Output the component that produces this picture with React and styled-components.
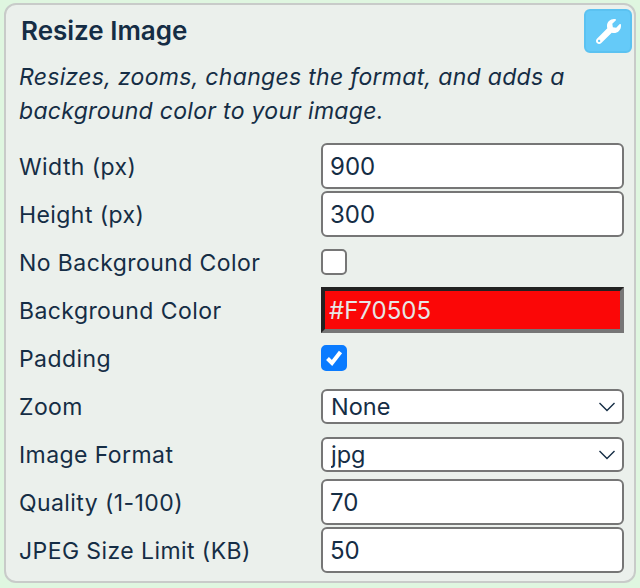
import React from 'react';
import styled, { createGlobalStyle } from 'styled-components';
import { FaWrench } from 'react-icons/fa';

const GlobalStyle = createGlobalStyle`
  html, body {
    margin: 0;
    padding: 0;
    background: #dff6e0;
  }
  body {
    font-family: Inter, "Liberation Sans", sans-serif;
    color: #152d45;
  }
  * {
    box-sizing: border-box;
  }
`;

const Page = styled.div`
  width: 640px;
  height: 588px;
  padding: 3px 4px 0;
`;

const Card = styled.section`
  position: relative;
  width: 632px;
  height: 580px;
  padding: 8px 12px 0 13px;
  background: #ebf0ec;
  border: 2px solid #c8cbc9;
  border-radius: 12px;
`;

const Title = styled.h2`
  margin: 0 0 0 2px;
  font-size: 26px;
  line-height: 36px;
  font-weight: 600;
`;

const Description = styled.p`
  margin: 11px 0 0;
  font-size: 23px;
  line-height: 34px;
  font-style: italic;
  letter-spacing: 0.3px;
`;

const ToolButton = styled.button`
  position: absolute;
  top: 4px;
  right: 2px;
  width: 48px;
  height: 44px;
  display: flex;
  align-items: center;
  justify-content: center;
  padding: 0;
  color: #fff;
  font-size: 25px;
  background: #65caf8;
  border: 2px solid #5bc2f1;
  border-radius: 6px;
`;

const Fields = styled.div`
  margin-top: 15px;
  display: flex;
  flex-direction: column;
  gap: 2px;
`;

const Row = styled.label`
  height: 46px;
  display: grid;
  grid-template-columns: 302px 303px;
  align-items: center;
`;

const LabelText = styled.span`
  padding-top: 2px;
  font-size: 23px;
  letter-spacing: 0.42px;
`;

const TextInput = styled.input`
  width: 303px;
  height: 46px;
  padding: 0 7px;
  font: inherit;
  font-size: 24px;
  color: #152d45;
  background: #fff;
  border: 2px solid #767676;
  border-radius: 6px;
  outline: none;
`;

const ColorInput = styled.input`
  width: 303px;
  height: 46px;
  padding: 0 4px;
  font: inherit;
  font-size: 24px;
  color: #e6e6e6;
  background: #fb0707;
  border-style: solid;
  border-width: 4px;
  border-color: #222 #767676 #767676 #222;
  border-radius: 0;
  outline: none;
`;

const CheckWrap = styled.span`
  position: relative;
  width: 26px;
  height: 26px;
  display: block;
`;

const CheckBox = styled.input`
  appearance: none;
  display: block;
  width: 26px;
  height: 26px;
  margin: 0;
  background: ${(props) => (props.checked ? '#0a7bff' : '#fff')};
  border: 2px solid ${(props) => (props.checked ? '#0a7bff' : '#767676')};
  border-radius: 5px;
`;

const CheckMark = styled.svg`
  position: absolute;
  top: 4px;
  left: 4px;
  width: 18px;
  height: 18px;
  pointer-events: none;
`;

const SelectWrap = styled.span`
  position: relative;
  display: block;
  width: 303px;
  height: 35px;
`;

const Select = styled.select`
  appearance: none;
  display: block;
  width: 303px;
  height: 35px;
  padding: 0 30px 0 8px;
  font: inherit;
  font-size: 23.5px;
  color: #152d45;
  background: #fff;
  border: 2px solid #767676;
  border-radius: 6px;
  outline: none;
`;

const Chevron = styled.svg`
  position: absolute;
  top: 12px;
  right: 8px;
  width: 18px;
  height: 12px;
  pointer-events: none;
`;

const Dropdown = ({ value, options }) => (
  <SelectWrap>
    <Select defaultValue={value}>
      {options.map((o) => (
        <option key={o}>{o}</option>
      ))}
    </Select>
    <Chevron viewBox="0 0 18 12" fill="none" stroke="#152d45" strokeWidth="1.4">
      <path d="M1.5 2 9 9.5 16.5 2" />
    </Chevron>
  </SelectWrap>
);

const Check = ({ checked }) => (
  <CheckWrap>
    <CheckBox type="checkbox" checked={checked} readOnly />
    {checked && (
      <CheckMark viewBox="0 0 18 18" fill="none" stroke="#fff" strokeWidth="4">
        <path d="M2.5 9.5 7 14 15.5 3" />
      </CheckMark>
    )}
  </CheckWrap>
);

const App = () => (
  <Page>
    <GlobalStyle />
    <Card>
      <Title>Resize Image</Title>
      <ToolButton type="button" aria-label="Settings">
        <FaWrench />
      </ToolButton>
      <Description>
        Resizes, zooms, changes the format, and adds a background color to your image.
      </Description>
      <Fields>
        <Row>
          <LabelText>Width (px)</LabelText>
          <TextInput defaultValue="900" />
        </Row>
        <Row>
          <LabelText>Height (px)</LabelText>
          <TextInput defaultValue="300" />
        </Row>
        <Row>
          <LabelText>No Background Color</LabelText>
          <Check checked={false} />
        </Row>
        <Row>
          <LabelText>Background Color</LabelText>
          <ColorInput defaultValue="#F70505" />
        </Row>
        <Row>
          <LabelText>Padding</LabelText>
          <Check checked />
        </Row>
        <Row>
          <LabelText>Zoom</LabelText>
          <Dropdown value="None" options={['None', 'Fit', 'Fill']} />
        </Row>
        <Row>
          <LabelText>Image Format</LabelText>
          <Dropdown value="jpg" options={['jpg', 'png', 'webp']} />
        </Row>
        <Row>
          <LabelText>Quality (1-100)</LabelText>
          <TextInput defaultValue="70" />
        </Row>
        <Row>
          <LabelText>JPEG Size Limit (KB)</LabelText>
          <TextInput defaultValue="50" />
        </Row>
      </Fields>
    </Card>
  </Page>
);

export default App;
